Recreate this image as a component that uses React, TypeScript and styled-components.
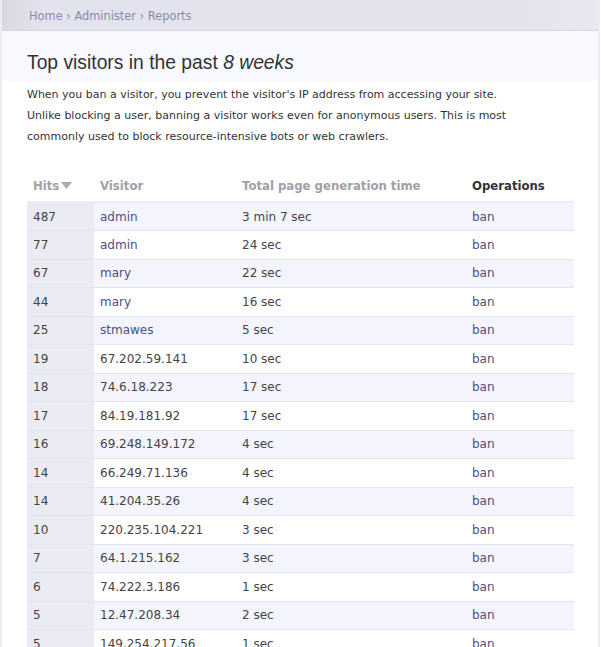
import React from "react";
import styled, { createGlobalStyle } from "styled-components";

const GlobalStyle = createGlobalStyle`
  html, body {
    margin: 0;
    padding: 0;
    background: #ffffff;
  }
  body {
    font-family: "DejaVu Sans", Verdana, sans-serif;
    color: #333;
  }
`;

interface Row {
  hits: number;
  visitor: string;
  isUser: boolean;
  time: string;
}

const rows: Row[] = [
  { hits: 487, visitor: "admin", isUser: true, time: "3 min 7 sec" },
  { hits: 77, visitor: "admin", isUser: true, time: "24 sec" },
  { hits: 67, visitor: "mary", isUser: true, time: "22 sec" },
  { hits: 44, visitor: "mary", isUser: true, time: "16 sec" },
  { hits: 25, visitor: "stmawes", isUser: true, time: "5 sec" },
  { hits: 19, visitor: "67.202.59.141", isUser: false, time: "10 sec" },
  { hits: 18, visitor: "74.6.18.223", isUser: false, time: "17 sec" },
  { hits: 17, visitor: "84.19.181.92", isUser: false, time: "17 sec" },
  { hits: 16, visitor: "69.248.149.172", isUser: false, time: "4 sec" },
  { hits: 14, visitor: "66.249.71.136", isUser: false, time: "4 sec" },
  { hits: 14, visitor: "41.204.35.26", isUser: false, time: "4 sec" },
  { hits: 10, visitor: "220.235.104.221", isUser: false, time: "3 sec" },
  { hits: 7, visitor: "64.1.215.162", isUser: false, time: "3 sec" },
  { hits: 6, visitor: "74.222.3.186", isUser: false, time: "1 sec" },
  { hits: 5, visitor: "12.47.208.34", isUser: false, time: "2 sec" },
  { hits: 5, visitor: "149.254.217.56", isUser: false, time: "1 sec" },
];

export default function App() {
  return (
    <Page>
      <GlobalStyle />
      <Breadcrumb>
        <a href="#">Home</a> › <a href="#">Administer</a> › <a href="#">Reports</a>
      </Breadcrumb>
      <TitleBar>
        <h1>
          Top visitors in the past <em>8 weeks</em>
        </h1>
      </TitleBar>
      <Content>
        <Help>
          When you ban a visitor, you prevent the visitor's IP address from
          accessing your site. Unlike blocking a user, banning a visitor works
          even for anonymous users. This is most commonly used to block
          resource-intensive bots or web crawlers.
        </Help>
        <Table>
          <thead>
            <HeadRow>
              <HeadCell width={67} sortable>
                Hits
                <SortArrow viewBox="0 0 11 7">
                  <path d="M0 0 L11 0 L5.5 7 Z" fill="#aaa" />
                </SortArrow>
              </HeadCell>
              <HeadCell width={142} sortable>
                Visitor
              </HeadCell>
              <HeadCell width={230} sortable>
                Total page generation time
              </HeadCell>
              <HeadCell>Operations</HeadCell>
            </HeadRow>
          </thead>
          <tbody>
            {rows.map((r, i) => (
              <BodyRow key={i} odd={i % 2 === 0}>
                <ActiveCell>{r.hits}</ActiveCell>
                <Cell>{r.isUser ? <Link href="#">{r.visitor}</Link> : r.visitor}</Cell>
                <Cell>{r.time}</Cell>
                <Cell>
                  <Link href="#">ban</Link>
                </Cell>
              </BodyRow>
            ))}
          </tbody>
        </Table>
      </Content>
    </Page>
  );
}

const Page = styled.div`
  width: 596px;
  height: 647px;
  overflow: hidden;
  border-left: 2px solid #ececf4;
  border-right: 2px solid #ececf4;
  background: #fff;
`;

const Breadcrumb = styled.div`
  height: 31px;
  box-sizing: border-box;
  margin-left: -2px;
  margin-right: -2px;
  padding: 9px 0 0 27px;
  border-left: 2px solid #8a8aa6;
  border-right: 2px solid #9a9ab4;
  border-bottom: 1px solid #d6d6e2;
  background: linear-gradient(to right, #d8d8e4 0px, #e3e3ed 40px, #e3e3ed 520px, #e8e8f0 100%);
  font-size: 11.4px;
  line-height: 15px;
  color: #8a8aaa;

  a {
    color: #8a8aaa;
    text-decoration: none;
  }
`;

const TitleBar = styled.div`
  background: #f8f8ff;
  padding: 20px 25px 0 25px;
  height: 50px;
  box-sizing: border-box;

  h1 {
    margin: 0;
    font-family: "Liberation Sans", Arial, sans-serif;
    font-weight: normal;
    font-size: 19.3px;
    line-height: 24px;
    color: #333;
  }

  em {
    font-style: italic;
  }
`;

const Content = styled.div`
  padding: 0 25px;
`;

const Help = styled.p`
  margin: 0;
  padding-top: 3px;
  width: 492px;
  font-size: 11px;
  line-height: 21px;
  color: #333;
`;

const Table = styled.table`
  margin-top: 27px;
  width: 547px;
  border-collapse: collapse;
  font-size: 12px;
`;

const HeadRow = styled.tr`
  height: 28px;
  border-bottom: 2px solid #ececf4;
`;

const HeadCell = styled.th<{ width?: number; sortable?: boolean }>`
  text-align: left;
  font-weight: bold;
  font-size: 11.7px;
  padding: 0 6px 3px 6px;
  vertical-align: middle;
  width: ${({ width }) => (width ? `${width - 12}px` : "auto")};
  color: ${({ sortable }) => (sortable ? "#a0a0a8" : "#333")};
  white-space: nowrap;
`;

const SortArrow = styled.svg`
  width: 11px;
  height: 7px;
  margin-left: 2px;
  vertical-align: 1px;
`;

const BodyRow = styled.tr<{ odd: boolean }>`
  height: 28.5px;
  background: ${({ odd }) => (odd ? "#f4f4fc" : "#ffffff")};
  border-bottom: 1px solid #e4e4ee;
`;

const Cell = styled.td`
  padding: 0 6px;
  color: #444;
  vertical-align: middle;
`;

const ActiveCell = styled(Cell)`
  background: #ebebf4;
`;

const Link = styled.a`
  color: #4e4e86;
  text-decoration: none;
`;
